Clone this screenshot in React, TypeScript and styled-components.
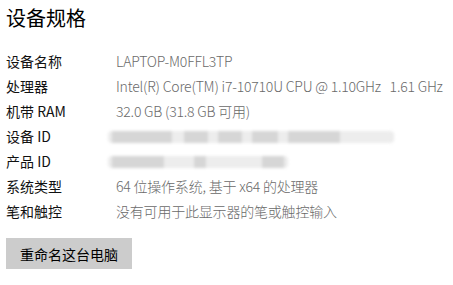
import React from 'react'
import styled, { createGlobalStyle } from 'styled-components'

const GlobalStyle = createGlobalStyle`
    html, body {
        margin: 0;
        padding: 0;
        background: #ffffff;
    }
    body {
        font-family: "Noto Sans CJK SC", "Noto Sans", sans-serif;
    }
`

interface Spec {
    label: string,
    value?: string,
    blur?: number[]
}

// widths of the smudged blocks that hide the IDs
const specs: Spec[] = [
    { label: '设备名称', value: 'LAPTOP-M0FFL3TP' },
    { label: '处理器', value: 'Intel(R) Core(TM) i7-10710U CPU @ 1.10GHz\u00a0\u00a0\u00a01.61 GHz' },
    { label: '机带 RAM', value: '32.0 GB (31.8 GB 可用)' },
    { label: '设备 ID', blur: [60, 12, 24, 10, 24, 10, 26, 10, 52, 50] },
    { label: '产品 ID', blur: [52, 30, 12, 56, 22] },
    { label: '系统类型', value: '64 位操作系统, 基于 x64 的处理器' },
    { label: '笔和触控', value: '没有可用于此显示器的笔或触控输入' },
]

export default function App() {
    return (
        <Page>
            <GlobalStyle />
            <Title>设备规格</Title>
            <List>
                {specs.map(spec => (
                    <Row key={spec.label}>
                        <Label>{spec.label}</Label>
                        {spec.blur ? (
                            <Blurred>
                                {spec.blur.map((w, i) => (
                                    <Smudge key={i} $width={w} $dark={i % 2 === 0} />
                                ))}
                            </Blurred>
                        ) : (
                            <Value>{spec.value}</Value>
                        )}
                    </Row>
                ))}
            </List>
            <RenameButton>重命名这台电脑</RenameButton>
        </Page>
    )
}

const Page = styled.div`
    padding: 4px 0 0 6px;
    width: 453px;
    height: 285px;
    box-sizing: border-box;
    overflow: hidden;
`

const Title = styled.h1`
    margin: 0;
    font-size: 20px;
    font-weight: 400;
    line-height: 28px;
    color: #000;
`

const List = styled.div`
    display: flex;
    flex-direction: column;
    margin-top: 16px;
`

const Row = styled.div`
    display: flex;
    align-items: center;
    height: 25px;
    font-size: 14px;
    white-space: nowrap;
`

const Label = styled.div`
    width: 110px;
    flex: none;
    color: #111;
`

const Value = styled.div`
    color: #6a6a6a;
    font-weight: 300;
    letter-spacing: -0.2px;
`

const Blurred = styled.div`
    display: flex;
    height: 12px;
    margin-left: -8px;
    margin-top: 2px;
    filter: blur(1.5px);
    background: #ececec;
    border-radius: 4px;
    padding: 0 4px;
`

const Smudge = styled.div<{ $width: number, $dark: boolean }>`
    width: ${p => p.$width}px;
    height: 100%;
    background: ${p => p.$dark ? '#d6d6d6' : '#ededed'};
`

const RenameButton = styled.button`
    margin-top: 15px;
    width: 126px;
    height: 31px;
    border: none;
    background: #cccccc;
    color: #000;
    font-family: inherit;
    font-size: 14px;
    padding: 0;
`
